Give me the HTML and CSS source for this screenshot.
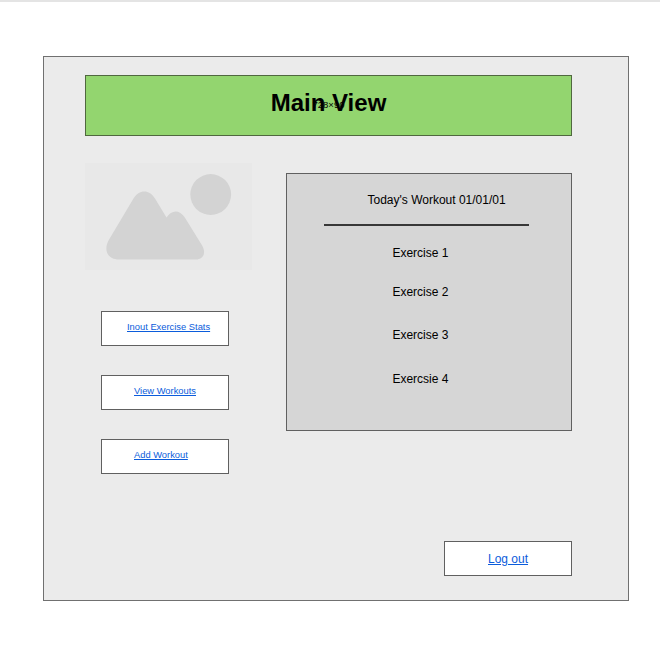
FILE: index.html
```html
<!DOCTYPE html>
<html lang="en">
<head>
<meta charset="utf-8">
<title>Main View</title>
<link rel="stylesheet" href="styles.css">
</head>
<body>
<main class="view">
  <header class="banner">
    <h1 class="title">Main View</h1>
    <span class="size">728×90</span>
  </header>
  <div class="content">
    <div class="side">
      <svg class="picture" viewBox="0 0 167 107" aria-hidden="true">
        <circle cx="125.7" cy="31.5" r="20.4"/>
        <path d="M48.500 35.500C54 26 64.500 26 70 35.500L81.500 54.500C86.500 46.500 94.500 46.500 99.500 54L116.500 81.500C122 90 118 96.500 111 96.500H34C22.500 96.500 18.500 87 23.500 77.500Z"/>
      </svg>
      <nav class="links">
        <a class="button stats" href="#"><span>Inout Exercise Stats</span></a>
        <a class="button" href="#"><span>View Workouts</span></a>
        <a class="button" href="#"><span>Add Workout</span></a>
      </nav>
    </div>
    <section class="workout">
      <h2 class="date">Today's Workout 01/01/01</h2>
      <ul class="exercises">
        <li>Exercise 1</li>
        <li>Exercise 2</li>
        <li>Exercise 3</li>
        <li>Exercsie 4</li>
      </ul>
    </section>
  </div>
  <a class="button logout" href="#"><span>Log out</span></a>
</main>
</body>
</html>
```
FILE: styles.css
```css
* { box-sizing: border-box; }
body {
  margin: 0;
  height: 668px;
  padding: 54px 31px 0 43px;
  border-top: 2px solid #e4e4e4;
  background: #fff;
  color: #000;
  font: 12px/14px "Liberation Sans", Arial, sans-serif;
}
.view {
  display: flex;
  flex-direction: column;
  width: 586px;
  height: 545px;
  padding: 18px 56px 24px 41px;
  border: 1px solid #707070;
  background: #ebebeb;
}
.banner {
  position: relative;
  flex: none;
  height: 61px;
  border: 1px solid #50683f;
  background: #93d56f;
  text-align: center;
}
.title { margin: 13px 0 0; font-size: 24px; line-height: 28px; }
.size {
  position: absolute;
  top: 23px;
  left: 0;
  right: 0;
  font-size: 9.5px;
  line-height: 12px;
}
.content { display: flex; justify-content: space-between; margin-top: 27px; }
.picture { display: block; width: 167px; height: 107px; background: #e8e8e8; fill: #d3d3d3; }
.links { display: grid; gap: 29px; margin: 41px 0 0 16px; }
.button {
  display: block;
  width: 128px;
  height: 35px;
  padding: 8px 0 0 32px;
  border: 1px solid #606060;
  background: #fff;
  color: #0b5cdb;
  font-size: 9.35px;
  text-decoration-thickness: 1px;
}
.stats { padding-left: 25px; }
.workout {
  width: 286px;
  height: 258px;
  margin-top: 10px;
  padding: 19px 42px 0 37px;
  border: 1px solid #606060;
  background: #d6d6d6;
}
.date {
  margin: 0;
  padding: 0 0 17px 43.5px;
  border-bottom: 2px solid #383838;
  font-size: 12px;
  font-weight: normal;
  white-space: nowrap;
}
.exercises {
  display: grid;
  grid-template-rows: 39px 43px 44px 14px;
  margin: 20px 0 0;
  padding: 0 0 0 68.4px;
  list-style: none;
}
.logout { align-self: flex-end; margin-top: auto; padding: 10px 0 0 43px; font-size: 12px; }
```
